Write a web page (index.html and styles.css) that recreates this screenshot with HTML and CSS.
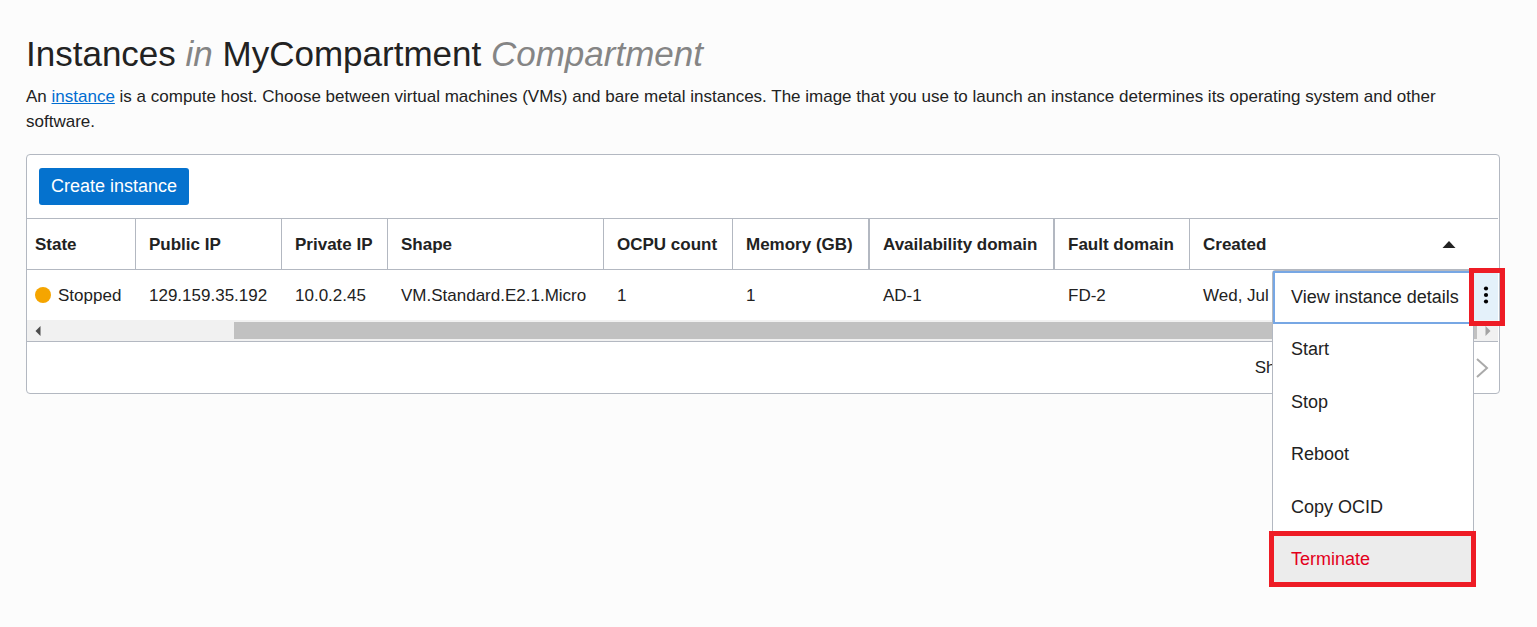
FILE: index.html
```html
<!DOCTYPE html>
<html lang="en">
<head>
<meta charset="utf-8">
<title>Instances</title>
<link rel="stylesheet" href="styles.css">
</head>
<body>
<main class="page">
  <h1 class="title">Instances <em>in</em> MyCompartment <em>Compartment</em></h1>
  <p class="intro">An <a href="#">instance</a> is a compute host. Choose between virtual machines (VMs) and bare metal instances. The image that you use to launch an instance determines its operating system and other software.</p>
  <section class="panel">
    <div class="toolbar"><button class="create" type="button">Create instance</button></div>
    <table class="instances">
      <colgroup>
        <col class="col-state"><col class="col-public"><col class="col-private"><col class="col-shape"><col class="col-ocpu"><col class="col-memory"><col class="col-ad"><col class="col-fd"><col><col class="col-actions">
      </colgroup>
      <thead>
        <tr>
          <th scope="col">State</th>
          <th scope="col">Public IP</th>
          <th scope="col">Private IP</th>
          <th scope="col">Shape</th>
          <th scope="col">OCPU count</th>
          <th scope="col" class="wide-rule">Memory (GB)</th>
          <th scope="col" class="wide-rule">Availability domain</th>
          <th scope="col">Fault domain</th>
          <th scope="col" class="no-rule" aria-sort="ascending"><span class="sortable">Created <svg width="14" height="8" viewBox="0 0 14 8" aria-hidden="true"><path d="M7 1 13.5 8H0.5Z" fill="#222"/></svg></span></th>
          <td class="no-rule"></td>
        </tr>
      </thead>
      <tbody>
        <tr>
          <td><span class="state"><span class="dot"></span>Stopped</span></td>
          <td>129.159.35.192</td>
          <td>10.0.2.45</td>
          <td>VM.Standard.E2.1.Micro</td>
          <td>1</td>
          <td>1</td>
          <td>AD-1</td>
          <td>FD-2</td>
          <td>Wed, Jul</td>
          <td class="actions">
            <div class="action-box">
              <div class="menu" role="menu">
                <button class="item focused" type="button" role="menuitem">View instance details</button>
                <button class="item" type="button" role="menuitem">Start</button>
                <button class="item" type="button" role="menuitem">Stop</button>
                <button class="item" type="button" role="menuitem">Reboot</button>
                <button class="item" type="button" role="menuitem">Copy OCID</button>
                <button class="item danger marked" type="button" role="menuitem">Terminate</button>
              </div>
              <button class="kebab marked" type="button" aria-label="Actions"><svg width="6" height="18" viewBox="0 0 6 18" aria-hidden="true"><circle cx="3" cy="2.5" r="2.1"/><circle cx="3" cy="9" r="2.1"/><circle cx="3" cy="15.5" r="2.1"/></svg></button>
            </div>
          </td>
        </tr>
      </tbody>
    </table>
    <div class="scrollbar">
      <span class="arrow"><svg width="6" height="10" viewBox="0 0 6 10"><path d="M0.5 5 5.5 0V10Z" fill="#4d4d4d"/></svg></span>
      <span class="track"><span class="thumb"></span></span>
      <span class="arrow"><svg width="6" height="10" viewBox="0 0 6 10"><path d="M0.5 0 5.5 5 0.5 10Z" fill="#a3a3a3"/></svg></span>
    </div>
    <footer class="pager">
      <span class="count">Showing 1 item</span>
      <button class="next" type="button" aria-label="Next page"><svg width="14" height="20" viewBox="0 0 14 20" aria-hidden="true"><path d="M2 1 12 10 2 19" fill="none" stroke="#aaa" stroke-width="2"/></svg></button>
    </footer>
  </section>
</main>
</body>
</html>
```
FILE: styles.css
```css
* { box-sizing: border-box; }
body {
  margin: 0;
  background: #fcfcfc;
  color: #222;
  font-family: "Liberation Sans", Arial, sans-serif;
  font-size: 17px;
  line-height: 25px;
}
button {
  font: inherit;
  font-size: 18px;
  color: inherit;
  border: 0;
  margin: 0;
  cursor: pointer;
}
svg { display: block; }
.page {
  min-height: 100vh;
  padding: 33px 37px 32px 26px;
}
.title {
  margin: 0 0 9px;
  font-size: 35px;
  line-height: 42px;
  font-weight: 400;
}
.title em { color: #858585; }
.intro { margin: 0 0 20px; }
.intro a { color: #006dd1; }
.panel {
  padding-right: 1px;
  background: #fff;
  border: 1px solid #b3b8c1;
  border-radius: 4px;
}
.toolbar { padding: 13px 12px; }
.create {
  padding: 6px 12px;
  background: #0572ce;
  color: #fff;
  border-radius: 3px;
}
.instances {
  width: 100%;
  table-layout: fixed;
  border-collapse: separate;
  border-spacing: 0;
}
.col-state { width: 109px; }
.col-public { width: 146px; }
.col-private { width: 106px; }
.col-shape { width: 216px; }
.col-ocpu { width: 129px; }
.col-memory { width: 137px; }
.col-ad { width: 185px; }
.col-fd { width: 135px; }
.col-actions { width: 24px; }
.instances th,
.instances td {
  height: 50px;
  padding: 0 0 0 13px;
  text-align: left;
  white-space: nowrap;
}
.instances th:first-child,
.instances td:first-child { padding-left: 8px; }
.instances thead th,
.instances thead td {
  height: 52px;
  border-top: 1px solid #b3b8c1;
  border-bottom: 1px solid #b3b8c1;
  border-right: 1px solid #b3b8c1;
}
.instances thead .wide-rule { border-right-width: 2px; }
.instances thead .no-rule { border-right: 0; }
.sortable {
  display: flex;
  align-items: center;
  justify-content: space-between;
  padding-right: 18px;
}
.state {
  display: flex;
  align-items: center;
  gap: 7px;
}
.dot {
  width: 16px;
  height: 16px;
  border-radius: 50%;
  background: #f5a500;
}
.instances .actions { padding: 0; }
.action-box {
  position: relative;
  height: 50px;
}
.kebab {
  position: relative;
  display: flex;
  align-items: center;
  justify-content: center;
  width: 100%;
  height: 100%;
  padding: 0;
  background: #e4f1fa;
}
.marked::after {
  content: "";
  position: absolute;
  border: 5px solid #ee1c25;
}
.kebab::after { inset: -2px -7px -6px -5px; }
.menu {
  position: absolute;
  top: 0;
  right: 24px;
  display: flex;
  flex-direction: column;
  width: 202px;
  min-height: 317px;
  background: #fff;
  border: 1px solid #b3b8c1;
  border-radius: 3px;
}
.item {
  position: relative;
  flex: 1;
  padding: 0 18px;
  background: #fff;
  text-align: left;
}
.focused {
  outline: 2px solid #77a7e4;
  outline-offset: -2px;
}
.danger {
  background: #ececec;
  color: #e3001b;
}
.danger::after { inset: -3px -3px -1px -4px; }
.scrollbar {
  display: flex;
  height: 21px;
  background: #f1f1f1;
}
.arrow {
  display: flex;
  align-items: center;
  justify-content: center;
  width: 21px;
}
.track {
  flex: 1;
  display: flex;
  justify-content: flex-end;
  padding: 2px 0;
}
.thumb {
  width: 87%;
  background: #c1c1c1;
}
.pager {
  display: flex;
  align-items: center;
  justify-content: flex-end;
  gap: 104px;
  padding: 13px 9px 13px 0;
  border-top: 1px solid #b3b8c1;
}
.next {
  padding: 0;
  background: none;
}
```
